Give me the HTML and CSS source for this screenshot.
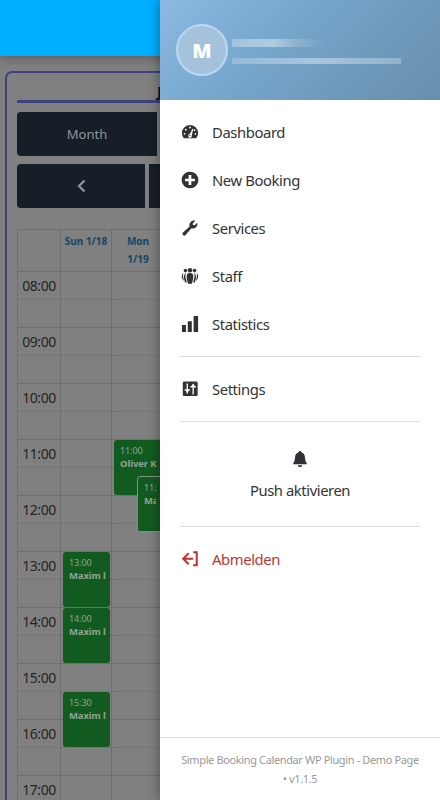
FILE: index.html
```html
<!DOCTYPE html>
<html lang="de">
<head>
<meta charset="utf-8">
<title>Simple Booking Calendar</title>
<link rel="stylesheet" href="styles.css">
</head>
<body>
<div class="page">
  <header class="topbar"></header>
  <main class="card">
    <h1 class="title">January 2026</h1>
    <div class="toolbar">
      <div class="btn month">Month</div>
      <div class="btn rest"></div>
    </div>
    <div class="toolbar nav">
      <div class="btn prev"><svg width="10" height="14" viewBox="0 0 10 14"><path d="M8.500 1.500 3 7l5.500 5.500" fill="none" stroke="currentColor" stroke-width="2.200"/></svg></div>
      <div class="btn rest"></div>
    </div>
    <div class="calendar">
      <div class="head corner"></div>
      <div class="head">Sun 1/18</div>
      <div class="head">Mon<br>1/19</div>
      <div class="column times">
        <div class="hour">08:00</div><div class="hour">09:00</div><div class="hour">10:00</div><div class="hour">11:00</div><div class="hour">12:00</div><div class="hour">13:00</div><div class="hour">14:00</div><div class="hour">15:00</div><div class="hour">16:00</div><div class="hour">17:00</div>
      </div>
      <div class="column">
        <div class="hour"></div><div class="hour"></div><div class="hour"></div><div class="hour"></div><div class="hour"></div>
        <div class="hour"><div class="event">13:00<b>Maxim l</b></div></div>
        <div class="hour"><div class="event">14:00<b>Maxim l</b></div></div>
        <div class="hour"><div class="event half">15:30<b>Maxim l</b></div></div>
        <div class="hour"></div><div class="hour"></div>
      </div>
      <div class="column">
        <div class="hour"></div><div class="hour"></div><div class="hour"></div>
        <div class="hour"><div class="event wide">11:00<b>Oliver K</b></div><div class="event overlap">11:<b>Ma</b></div></div>
        <div class="hour"></div><div class="hour"></div><div class="hour"></div><div class="hour"></div><div class="hour"></div><div class="hour"></div>
      </div>
    </div>
  </main>
</div>
<aside class="drawer">
  <div class="profile">
    <div class="avatar">M</div>
    <div class="identity"><div class="line name"></div><div class="line mail"></div></div>
  </div>
  <nav class="menu">
    <a class="item"><svg class="icon" viewBox="0 0 20 20"><path fill="currentColor" d="M3.200 17A9 9 0 1 1 16.800 17Z"/><g fill="#fff"><circle cx="4" cy="12" r="1"/><circle cx="5.300" cy="7.400" r="1"/><circle cx="10" cy="5" r="1"/><circle cx="16" cy="12" r="1"/><circle cx="15" cy="8" r="1"/><path d="m12.800 6.300.9.500-1.700 6.600a2.100 2.100 0 1 1-2.200-1.200Z"/></g><circle cx="10.100" cy="14" r=".8" fill="currentColor"/></svg><span>Dashboard</span></a>
    <a class="item"><svg class="icon" viewBox="0 0 20 20"><circle cx="10" cy="10" r="9.300" fill="currentColor"/><path d="M10 4.500v11M4.500 10h11" stroke="#fff" stroke-width="3"/></svg><span>New Booking</span></a>
    <a class="item"><svg class="icon" viewBox="0 0 20 20"><path fill="currentColor" d="M16.700 9.200c-1.400 1.400-3.400 1.800-5.100 1.100l-6.500 7.600c-.8.800-2.100.8-2.900 0s-.8-2.100 0-2.900l7.400-6.600C9 6.700 9.400 4.700 10.800 3.300 12.200 1.900 14.200 1.300 15.900 2L13 4.900l.4 1.700 1.700.4L18 4.100c.7 1.700.1 3.700-1.300 5.100Z"/></svg><span>Services</span></a>
    <a class="item"><svg class="icon" viewBox="0 0 20 20"><g fill="currentColor"><circle cx="10" cy="3.500" r="2.500"/><circle cx="4.900" cy="4" r="2"/><circle cx="15.100" cy="4" r="2"/><path d="M10 6.700c2.800 0 4 1.700 3.700 4.800-.2 2.800-1 4.500-1.500 7H7.800c-.5-2.500-1.300-4.200-1.500-7C6 8.400 7.200 6.700 10 6.700ZM5.700 6.800c-1.200 2.200-1.100 4.500 0 7.200l.8 3.300H4.800C3 13.500 2 9 5.700 6.800Zm8.600 0c1.200 2.200 1.100 4.500 0 7.200l-.8 3.300h1.700C17 13.500 18 9 14.300 6.800ZM2.600 6.800c-.7 2.700-.5 5.200.9 8.700C.6 13.500-.1 9 2.600 6.800Zm14.800 0c.7 2.700.5 5.200-.9 8.700 2.900-2 3.600-6.500.9-8.700Z"/></g></svg><span>Staff</span></a>
    <a class="item"><svg class="icon" viewBox="0 0 20 20"><path fill="currentColor" d="M14 1h5v18h-5zM7.500 7h4.500v12H7.500zM1 11h4.500v8H1z"/></svg><span>Statistics</span></a>
    <hr class="rule">
    <a class="item"><svg class="icon" viewBox="0 0 20 20"><rect x="2" y="1.800" width="16.500" height="16" rx="1.500" fill="currentColor"/><g fill="none" stroke="#fff" stroke-width="1.500"><path d="M7 4v11M4 11h6M13.500 5v11M10.500 7.500h6"/></g><path fill="#fff" d="m4.700 11.500h4.600L7 14.500zM11.200 7.200h4.600L13.500 4z"/></svg><span>Settings</span></a>
    <hr class="rule">
    <a class="push"><svg class="icon" viewBox="0 0 20 20"><path fill="currentColor" d="M10 1c1 0 1.500.7 1.500 1.600 2.500.7 3.700 2.400 4 5.400.3 3.500.7 5 2 6.500v1.300h-15v-1.300c1.300-1.500 1.700-3 2-6.500.3-3 1.500-4.700 4-5.400C8.500 1.700 9 1 10 1ZM7.500 17h5c-.3 1.500-1.200 2-2.500 2s-2.200-.5-2.500-2Z"/></svg><span>Push aktivieren</span></a>
    <hr class="rule">
    <a class="item logout"><svg class="icon" viewBox="0 0 20 20"><path fill="none" stroke="currentColor" stroke-width="2.300" d="M8.500 3.500 2.500 9.700l6 6.200M3 9.700h10.500M13.500 2.500h4V17h-4"/></svg><span>Abmelden</span></a>
  </nav>
  <footer class="footer">Simple Booking Calendar WP Plugin - Demo Page<br>• v1.1.5</footer>
</aside>
</body>
</html>
```
FILE: styles.css
```css
* { box-sizing: border-box; }
body { margin: 0; width: 440px; height: 800px; overflow: hidden; position: relative; background: #808080; font-family: "Noto Sans", sans-serif; }
.page { height: 800px; overflow: hidden; }
.topbar { height: 56px; background: #00b0ff; box-shadow: 0 2px 10px rgba(0,0,0,.3); }
.card { margin: 15px 5px 0; height: 760px; border: 2px solid #3b427d; border-radius: 7px 7px 0 0; padding: 8px 10px; }
.title { margin: 0 0 9px; height: 22px; border-bottom: 3px solid #3b427d; font-size: 15px; line-height: 20px; color: #111; padding-left: 140px; white-space: nowrap; }
.toolbar { display: flex; gap: 4px; height: 44px; margin-bottom: 8px; }
.nav { margin-bottom: 21px; }
.btn { display: flex; align-items: center; justify-content: center; background: #161e27; color: #929497; font-size: 13px; }
.month { width: 140px; border-radius: 4px 0 0 4px; font-size: 13px; }
.prev { width: 128px; border-radius: 4px 0 0 4px; }
.rest { flex: 1; }
.calendar { display: grid; grid-template-columns: 43px 51px 53px; border-left: 1px solid #6e706f; border-top: 1px solid #6e706f; width: 148px; }
.head { height: 41px; border-right: 1px solid #6e706f; text-align: center; font-size: 10px; font-weight: 700; line-height: 18px; padding-top: 2px; color: #114667; white-space: nowrap; }
.column { border-right: 1px solid #6e706f; }
.hour { position: relative; height: 56px; border-top: 1px solid #6e706f; font-size: 14px; letter-spacing: -.45px; line-height: 27px; color: #242424; text-align: center; }
.hour::after { content: ""; position: absolute; top: 27px; left: 0; right: 0; border-top: 1px dotted #6c6e6d; }
.event { position: absolute; z-index: 1; top: 0; left: 2px; width: 47px; height: 55px; overflow: hidden; background: #125b20; border-radius: 3px; padding: 4px 6px; text-align: left; color: #91a394; font-size: 9px; letter-spacing: -.1px; line-height: 13px; white-space: nowrap; }
.event b { display: block; font-size: 9.5px; }
.half { top: 28px; }
.wide { width: 60px; }
.overlap { top: 36px; left: 25px; z-index: 2; width: 45px; height: 56px; border: 1px solid #849084; }
.overlap b { width: 12px; overflow: hidden; }
.drawer { position: absolute; z-index: 10; top: 0; left: 160px; width: 280px; height: 800px; display: flex; flex-direction: column; background: #fff; box-shadow: -2px 0 10px rgba(0,0,0,.3); color: #333; }
.profile { display: flex; align-items: center; gap: 4px; height: 100px; padding: 0 16px; background: linear-gradient(135deg, #8bb9e3 0%, #75a4c9 45%, #688eac 100%); }
.avatar { width: 52px; height: 52px; border: 2px solid #b9d9f4; border-radius: 50%; background: #a4c2dc; color: #fff; font: 800 20px/50px "Open Sans", sans-serif; text-align: center; }
.identity { display: flex; flex-direction: column; gap: 11px; padding-top: 2px; }
.line { filter: blur(.5px); }
.name { width: 92px; height: 8px; background: linear-gradient(90deg, #a1c3de, #b1cbe0 45%, #8eb1cf 70%, transparent); }
.mail { width: 169px; height: 6px; background: linear-gradient(90deg, #95bad8, #a8c5dc 50%, #92b2cc); }
.menu { flex: 1; padding-top: 8px; }
.item { display: flex; align-items: center; gap: 12px; height: 48px; padding: 0 20px; font-size: 14.8px; letter-spacing: -.4px; }
.icon { display: block; width: 20px; height: 18px; color: #303236; }
.rule { height: 1px; margin: 8px 20px; border: 0; background: #ddd; }
.push { display: flex; flex-direction: column; align-items: center; height: 88px; padding-top: 20px; gap: 12px; font-size: 14.8px; letter-spacing: -.42px; line-height: 20px; }
.logout, .logout .icon { color: #bd3535; }
.footer { height: 63px; border-top: 1px solid #ddd; padding-top: 12px; text-align: center; font-size: 11px; letter-spacing: -.37px; line-height: 19px; color: #999; white-space: nowrap; }
```
